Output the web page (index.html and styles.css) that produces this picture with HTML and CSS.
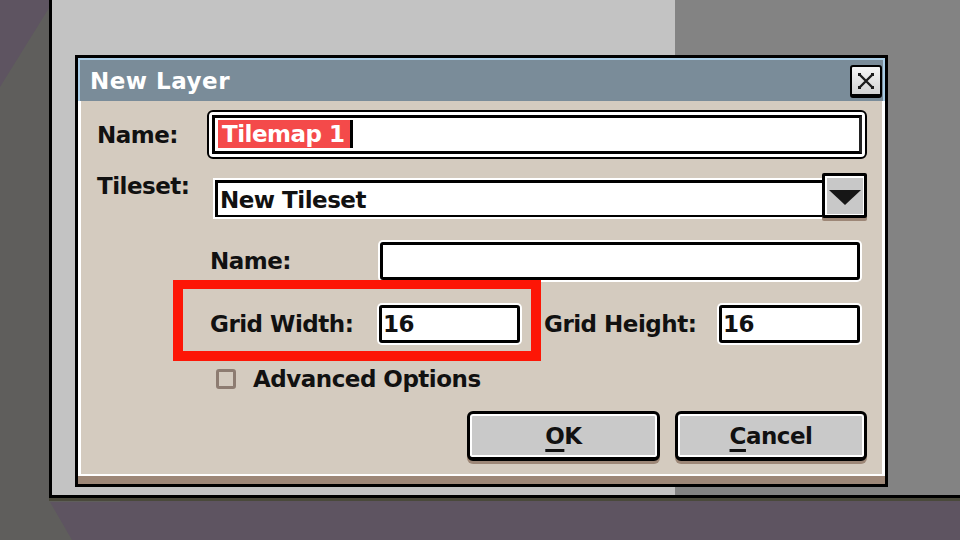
FILE: index.html
```html
<!DOCTYPE html>
<html lang="en">
<head>
<meta charset="utf-8">
<title>New Layer</title>
<link rel="stylesheet" href="styles.css">
</head>
<body>
<div class="desk">
  <div class="canvas">
    <div class="dialog">
      <div class="titlebar">
        <span class="title">New Layer</span>
        <button class="close" aria-label="Close">
          <svg width="20" height="20" viewBox="0 0 20 20">
            <path d="M4 4 L16 16 M16 4 L4 16" stroke="#1c1c1c" stroke-width="2.4" fill="none"/>
            <rect x="2" y="2" width="3" height="3" fill="#1c1c1c"/>
            <rect x="15" y="2" width="3" height="3" fill="#1c1c1c"/>
            <rect x="2" y="15" width="3" height="3" fill="#1c1c1c"/>
            <rect x="15" y="15" width="3" height="3" fill="#1c1c1c"/>
          </svg>
        </button>
      </div>
      <div class="body">
        <div class="row row-name">
          <span class="label label-main">Name:</span>
          <div class="focus-field">
            <div class="focus-inner">
              <span class="selection">Tilemap 1</span><span class="caret"></span>
            </div>
          </div>
        </div>
        <div class="row row-tileset">
          <span class="label label-tileset">Tileset:</span>
          <div class="combo">New Tileset</div>
          <div class="combo-btn"><span class="tri"></span></div>
        </div>
        <div class="row row-sub">
          <span class="label label-sub">Name:</span>
          <div class="field field-wide"></div>
        </div>
        <div class="row row-grid">
          <span class="label label-gw">Grid Width:</span>
          <div class="field field-num">16</div>
          <span class="label label-gh">Grid Height:</span>
          <div class="field field-num">16</div>
        </div>
        <div class="row row-check">
          <span class="checkbox"></span>
          <span class="label">Advanced Options</span>
        </div>
        <div class="row row-buttons">
          <button class="btn btn-ok"><u>O</u>K</button>
          <button class="btn btn-cancel"><u>C</u>ancel</button>
        </div>
      </div>
      <div class="highlight"></div>
    </div>
  </div>
</div>
</body>
</html>
```

FILE: styles.css
```css
* { box-sizing: border-box; }

html, body {
  margin: 0;
  padding: 0;
}

body {
  width: 960px;
  height: 540px;
  overflow: hidden;
  font-family: "DejaVu Sans", "Noto Sans", sans-serif;
  font-weight: bold;
  font-size: 23px;
  letter-spacing: -0.5px;
  color: #111;
}

.desk {
  position: relative;
  width: 960px;
  height: 540px;
  background: #5e5461;
  overflow: hidden;
}

.desk::before {
  content: "";
  position: absolute;
  left: 0;
  top: 0;
  width: 120px;
  height: 540px;
  background: #5f5e5c;
  clip-path: polygon(0 87px, 54px 0, 120px 0, 120px 502px, 50px 502px, 72px 540px, 0 540px);
}

.canvas {
  position: relative;
  margin-left: 49px;
  width: 911px;
  height: 498px;
  border-left: 3px solid #000;
  border-bottom: 3px solid #000;
  box-shadow: 0 3px 0 #4a493b;
  background: linear-gradient(to right, #c3c3c3 623px, #838383 623px);
}

.dialog {
  position: absolute;
  left: 23px;
  top: 55px;
  width: 813px;
  height: 432px;
  border: 3px solid #000;
  background: #9d8777;
  display: flex;
  flex-direction: column;
}

.titlebar {
  height: 43px;
  flex: none;
  background: #7a8c99;
  border-top: 2px solid #a9cde6;
  border-left: 2px solid #a9cde6;
  border-right: 2px solid #a9cde6;
  display: flex;
  align-items: center;
  justify-content: space-between;
  padding: 0 1px 0 10px;
}

.title {
  color: #fff;
  letter-spacing: 0.5px;
}

.close {
  width: 32px;
  height: 33px;
  padding: 0;
  margin-top: 2px;
  border: 2px solid #000;
  border-bottom-width: 4px;
  border-radius: 3px;
  background: linear-gradient(#f6f6f6, #d2d2d2);
  display: flex;
  align-items: center;
  justify-content: center;
}

.body {
  height: 375px;
  flex: none;
  background: #d4cbbf;
  border-left: 3px solid #fff;
  border-right: 3px solid #fff;
  border-bottom: 2px solid #fff;
  padding: 9px 15px 0 16px;
  position: relative;
}

.row {
  display: flex;
  align-items: center;
}

.label {
  white-space: nowrap;
  line-height: 22px;
}

/* Row 1 */
.row-name { height: 49px; }
.label-main { width: 110px; }

.focus-field {
  width: 660px;
  height: 49px;
  border: 2px solid #000;
  border-radius: 6px;
  background: #fff;
  padding: 3px;
}

.focus-inner {
  height: 39px;
  border: 3px solid #000;
  border-right-color: #222;
  background: #fff;
  padding: 2px 3px;
  display: flex;
  align-items: flex-start;
}

.selection {
  height: 28px;
  line-height: 28px;
  padding: 0 5px 0 4px;
  background: #f44a4a;
  color: #fff;
  font-weight: bold;
}

.caret {
  width: 3px;
  height: 28px;
  background: #000;
}

/* Row 2 */
.row-tileset {
  margin-top: 14px;
  height: 48px;
  align-items: flex-start;
}

.label-tileset {
  width: 116px;
  margin-top: 2px;
}

.combo {
  width: 609px;
  height: 41px;
  margin-top: 5px;
  background: #fff;
  border-top: 2px solid #fff;
  border-left: 2px solid #fff;
  border-bottom: 2px solid #fff;
  box-shadow: inset 3px 3px 0 #000, inset 0 -2px 0 #000;
  padding: 5px 0 0 5px;
  line-height: 30px;
  font-weight: bold;
}

.combo-btn {
  width: 45px;
  height: 45px;
  border: 3px solid #000;
  border-bottom-width: 3px;
  border-radius: 2px;
  background: #c8c8c8;
  box-shadow: inset 2px 2px 0 #fff, inset -1px -1px 0 #fff, 0 3px 0 #9d8777;
  display: flex;
  align-items: center;
  justify-content: center;
}

.tri {
  width: 0;
  height: 0;
  border-left: 16px solid transparent;
  border-right: 16px solid transparent;
  border-top: 15px solid #161616;
  margin-top: 3px;
}

/* Rows 3-4 */
.row-sub {
  margin-top: 19px;
  height: 42px;
  padding-left: 113px;
}

.label-sub { width: 170px; }

.field {
  height: 38px;
  border: 3px solid #000;
  border-radius: 3px;
  background: #fff;
  box-shadow: 0 0 0 2px #fff;
  padding-left: 1px;
  line-height: 32px;
  font-weight: bold;
}

.field-wide { width: 480px; }

.row-grid {
  margin-top: 21px;
  height: 41px;
  padding-left: 113px;
}

.label-gw { width: 169px; }
.field-num { width: 141px; }
.label-gh { width: 175px; margin-left: 24px; }

/* Row 5 */
.row-check {
  margin-top: 24px;
  height: 22px;
  padding-left: 119px;
}

.checkbox {
  width: 20px;
  height: 20px;
  border: 3px solid #8d7c71;
  border-radius: 3px;
  margin-right: 17px;
}

/* Buttons */
.row-buttons {
  margin-top: 21px;
  height: 53px;
  align-items: flex-start;
  justify-content: flex-end;
  gap: 15px;
}

.btn {
  height: 50px;
  padding: 0;
  font: inherit;
  letter-spacing: inherit;
  color: #111;
  background: #c9c9c9;
  border: 3px solid #000;
  border-bottom-width: 4px;
  border-radius: 6px;
  box-shadow: inset 0 0 0 2px #fff, 0 3px 0 #9d8777;
  line-height: 30px;
}

.btn u {
  text-decoration-thickness: 3px;
  text-underline-offset: 5px;
}

.btn-ok { width: 193px; }
.btn-cancel { width: 192px; }

/* Red annotation */
.highlight {
  position: absolute;
  left: 95px;
  top: 222px;
  width: 368px;
  height: 81px;
  border: 10px solid #fd1606;
  border-top-width: 9px;
}
```
